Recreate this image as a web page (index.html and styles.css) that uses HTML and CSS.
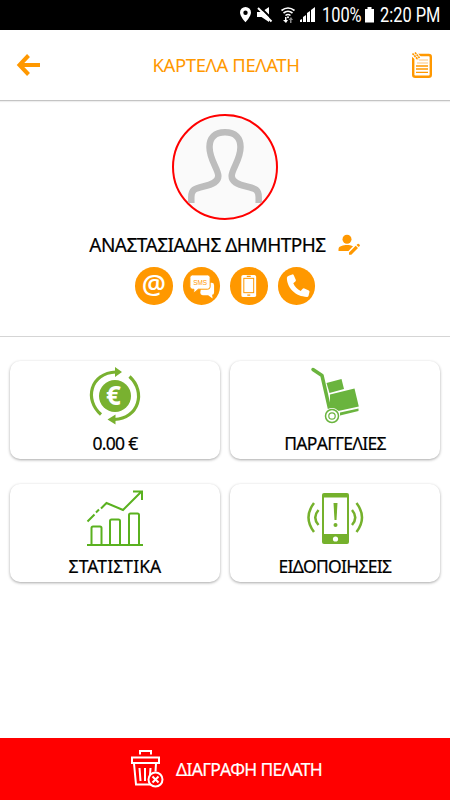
FILE: index.html
```html
<!DOCTYPE html>
<html lang="el">
<head>
    <meta charset="UTF-8">
    <meta name="viewport" content="width=device-width, initial-scale=1.0">
    <title>Καρτέλα Πελάτη</title>
    <link rel="stylesheet" href="styles.css">
</head>
<body>

    <div class="status-bar">
        <svg width="80" height="30" viewBox="238 0 80 30" fill="#fff">
            <path fill-rule="evenodd" d="M245.500 7a5.500 5.500 0 0 0-5.500 5.500c0 4 5.500 9.800 5.500 9.800s5.500-5.800 5.500-9.800a5.500 5.500 0 0 0-5.500-5.500zm0 3.500a2.200 2.200 0 1 1 0 4.400 2.200 2.200 0 0 1 0-4.400z"/>
            <path d="M257 12h4.500l7.500-5v15l-7.500-5H257z"/>
            <path d="M259.500 6.500l14 14" stroke="#000" stroke-width="2"/>
            <path d="M258 8l13.500 13.500" stroke="#fff" stroke-width="2"/>
            <g fill="none" stroke="#fff" stroke-width="1.600">
                <path d="M281.500 10.500q6.500-5 13 0M283.500 13q4.500-3.500 9 0M285.500 15.500q2.500-2 5 0"/>
            </g>
            <circle cx="288" cy="17.300" r="1"/>
            <path d="M285 17v3h-2l3 3 2-3h-1.500v-3z"/>
            <path d="M290 23v-3h-1.500l2.500-3 2 3h-1.500v3z" fill="#888"/>
            <path d="M300 22v-2l2-1v3zM303 22v-5l3-2v7zM307 22v-9l3-2v11zM311 22V10l4-3v15z"/>
        </svg>
        <span class="battery-text"><span>100%</span></span>
        <svg width="12" height="30" viewBox="0 0 12 30" fill="#fff">
            <path d="M1 9h2.500V7h4v2H10v13.500H1z"/>
        </svg>
        <span class="clock"><span>2:20 PM</span></span>
    </div>

    <div class="header">
        <svg width="26" height="24" viewBox="16 53 26 24" fill="none" stroke="#ff9800" stroke-width="4">
            <path d="M40 65H20M28.500 55.500L19.500 65l9 9.500"/>
        </svg>
        <h1>ΚΑΡΤΕΛΑ ΠΕΛΑΤΗ</h1>
        <svg width="24" height="28" viewBox="410 51 24 28" fill="none" stroke="#ff9800">
            <rect x="413.200" y="55" width="17.600" height="21.800" rx="2" stroke-width="2.400"/>
            <path d="M419 60h9M417 63h11" stroke="#ffc477"/>
            <path d="M416 66h12M416 69h12M416 72.300h12" stroke-width="1.300"/>
            <path d="M411 51h5l5 6-4 4-6-5z" fill="#fff" stroke="none"/>
            <path d="M412.500 53.500l5.500 6M415 52.500l4.500 5.500" stroke-width="1.700" stroke-dasharray="2 .6"/>
        </svg>
    </div>

    <div class="profile">
        <div class="avatar">
            <svg width="102" height="102" viewBox="174 116 102 102" fill="none" stroke="#bdbdbd" stroke-width="6.500">
                <path d="M191.300 203v-6c0-7 3-8.500 12-10.500 10-2.200 15-5 15-10.500 0-7-8.800-16-8.800-29 0-9 5-14.800 15.500-14.800s15.500 5.800 15.500 14.800c0 13-8.800 22-8.800 29 0 5.500 5 8.300 15 10.500 9 2 12 3.500 12 10.500v6"/>
            </svg>
        </div>

        <div class="customer">
            <h2>ΑΝΑΣΤΑΣΙΑΔΗΣ ΔΗΜΗΤΡΗΣ</h2>
            <svg width="24" height="24" viewBox="336 233 24 24" fill="#ff9800">
                <circle cx="346" cy="239.300" r="4.500"/>
                <path d="M337.500 251v-2c0-3 5-4 8.500-4 2 0 4.500.4 6 1.200L347.500 251z"/>
                <path d="M348 252.500l6.700-6.700 2.300 2.300-6.700 6.700H348zM355.500 245l1.100-1.100q.7-.5 1.200 0l.9.900q.6.600 0 1.200l-1 1z"/>
            </svg>
        </div>

        <div class="contacts">
            <div class="contact at">@</div>
            <div class="contact">
                <svg width="37.500" height="37.500" viewBox="0 0 38 38" fill="#fff">
                    <path d="M19 16h10q2.500 0 2.500 2.500v7q0 2.500-2 2.700l.5 3.800-4.500-3.500H20q-2.500 0-2.500-2.500z"/>
                    <path d="M9.500 8h15.500q2.500 0 2.500 2.500v9.500q0 2.500-2.500 2.500H15.500l-4.500 4v-4H9.500Q7 22.500 7 20v-9.500Q7 8 9.500 8z" stroke="#ff9800"/>
                    <text class="sms" x="17.300" y="18" text-anchor="middle">SMS</text>
                </svg>
            </div>
            <div class="contact">
                <svg width="37.500" height="37.500" viewBox="0 0 38 38">
                    <rect x="11.500" y="8" width="15" height="22.500" rx="2" fill="#fff"/>
                    <rect x="13.500" y="11" width="11" height="15.500" fill="#ff9800"/>
                    <rect x="14.500" y="12" width="9" height="13.500" fill="#fff"/>
                    <path d="M17 9.500h4M17.500 28.500h3" stroke="#ff9800" stroke-width="1.500"/>
                </svg>
            </div>
            <div class="contact">
                <svg width="37.500" height="37.500" viewBox="0 0 38 38" fill="#fff">
                    <path d="M11.500 8.500l3-1q1-.2 1.500.9l2 4.500q.4 1-.4 1.700l-2.100 1.900c1.500 3.500 4 6.200 7.500 7.700l2-2.200q.8-.8 1.800-.3l4.400 2q1 .5.700 1.600l-1 4q-.4 1-1.500 1C18 30.200 9 21.500 9 11q0-1.800 2.500-2.500z"/>
                </svg>
            </div>
        </div>
    </div>

    <div class="cards">
        <div class="card">
            <svg width="60" height="60" viewBox="85 365 60 60">
                <circle cx="115" cy="396" r="16" fill="#79b130"/>
                <g fill="none" stroke="#79b130" stroke-width="3.200">
                    <path d="M101 414.500C84 400 90 373 116 372"/>
                    <path d="M129.500 376.500c17 15.500 9 42-15 43"/>
                </g>
                <path d="M115 367l7 5-7 5zM115.500 414.500l-8 5 8 5z" fill="#79b130"/>
                <text class="coin" x="113.500" y="405" text-anchor="middle">€</text>
            </svg>
            <p class="amount">0.00 €</p>
        </div>

        <div class="card">
            <svg width="60" height="60" viewBox="305 365 60 60" fill="#6ab43e">
                <path d="M313 369.500l9 6 7.500 33" fill="none" stroke="#6ab43e" stroke-width="3.500" stroke-linecap="round" stroke-linejoin="round"/>
                <path d="M326.500 383l15-4 2.500 10-14.500 4z"/>
                <path d="M330 394.500l24.500-6 4.300 18-25 5.500q-2.500-2-3.800-2zM340 412.500l18.500-4v2.600l-18.500 4.500z"/>
                <circle cx="332" cy="416" r="8" fill="#fff"/>
                <circle cx="332" cy="416" r="6.500" fill="#fff" stroke="#6ab43e" stroke-width="1.500"/>
                <circle cx="332" cy="416" r="3.200" fill="#fff" stroke="#6ab43e" stroke-width="1.200"/>
            </svg>
            <p>ΠΑΡΑΓΓΕΛΙΕΣ</p>
        </div>

        <div class="card">
            <svg width="60" height="60" viewBox="85 488 60 60" fill="none" stroke="#5ab11f" stroke-width="2">
                <path d="M87 545h56M91.500 545v-17q0-1.500 1.500-1.500h7q1.500 0 1.500 1.500v17M110 545v-24q0-1.500 1.500-1.500h7q1.500 0 1.500 1.500v24M129 545v-30q0-1.500 1.500-1.500h7q1.500 0 1.500 1.500v30"/>
                <path d="M87.500 521.500l7-7M96 512.500l3-3M101 508.500l5.500-5.500 16.500 7 18.500-18.500M133 491.500h9v8.500"/>
            </svg>
            <p class="stats">ΣΤΑΤΙΣΤΙΚΑ</p>
        </div>

        <div class="card">
            <svg width="60" height="60" viewBox="305 488 60 60" fill="none" stroke="#75b12c">
                <rect x="322" y="493" width="27" height="51" rx="2" fill="#75b12c" stroke="none"/>
                <path d="M324 497.500h23V534h-23z" fill="#fff" stroke="none"/>
                <circle cx="335.500" cy="539" r="2.600" fill="#fff" stroke="none"/>
                <path d="M333.500 503h4l-1 17h-2z" fill="#75b12c" stroke="none"/>
                <circle cx="335.500" cy="525" r="2" fill="#75b12c" stroke="none"/>
                <path d="M314 503q-11 14.500 0 29M318.500 510q-6.500 7.500 0 15M356.500 503q11 14.500 0 29M352 510q6.500 7.500 0 15" stroke-width="2.500"/>
            </svg>
            <p>ΕΙΔΟΠΟΙΗΣΕΙΣ</p>
        </div>
    </div>

    <div class="footer">
        <svg width="36" height="40" viewBox="130 749 36 40" fill="none" stroke="#fff" stroke-width="2">
            <path d="M140 754.500v-3.500h11v3.500M132 757.500h27v5.500h-27zM134 763.500l2 21h15M156 763.500l-.5 8M139.500 768l1 13M145 768v13M150.500 768l-.5 7"/>
            <circle cx="155.500" cy="779.500" r="7" fill="#f00"/>
            <path d="M152.500 776.500l6 6M158.500 776.500l-6 6"/>
        </svg>
        <p>ΔΙΑΓΡΑΦΗ ΠΕΛΑΤΗ</p>
    </div>

</body>
</html>
```
FILE: styles.css
```css
* {
    box-sizing: border-box;
}

body {
    font-family: 'Noto Sans', sans-serif;
    margin: 0;
    padding: 0;
    height: 800px;
    display: flex;
    flex-direction: column;
    background-color: #fff;
    color: #000;
    overflow: hidden;
}

h1, h2, p {
    margin: 0;
    font-weight: 400;
    white-space: nowrap;
    -webkit-text-stroke: 0.2px;
}

svg {
    display: block;
    flex: none;
}

.status-bar {
    height: 30px;
    flex: none;
    background: #000;
    color: #fff;
    display: flex;
    padding-left: 238px;
    font-family: Roboto, sans-serif;
    font-size: 19.5px;
    line-height: 31px;
}

.status-bar span span {
    display: block;
    white-space: nowrap;
    transform: scaleX(0.84);
    transform-origin: left;
}

.battery-text {
    width: 42px;
    margin-left: 4px;
}

.clock {
    width: 62px;
    margin-left: 4px;
}

.header {
    height: 71px;
    flex: none;
    display: flex;
    align-items: center;
    justify-content: space-between;
    padding: 0 16px;
    border-bottom: 1px solid #c4c4c4;
    box-shadow: 0 1px 1px #eee;
    color: #ff9800;
}

.header h1 {
    font-size: 18.5px;
    line-height: 24px;
    letter-spacing: -0.4px;
    -webkit-text-stroke: 0;
}

.profile {
    height: 236px;
    flex: none;
    display: flex;
    flex-direction: column;
    align-items: center;
    padding-top: 13px;
    border-bottom: 1px solid #d5d5d5;
}

.avatar {
    width: 106px;
    height: 106px;
    border: 2px solid #f00;
    border-radius: 50%;
    background: #fafafa;
    overflow: hidden;
}

.customer {
    display: flex;
    align-items: center;
    gap: 11px;
    height: 26px;
    margin-top: 12px;
}

.customer h2 {
    font-size: 19px;
    letter-spacing: -0.5px;
}

.contacts {
    display: flex;
    gap: 10px;
    margin-top: 9px;
}

.contact {
    width: 37.5px;
    height: 37.5px;
    border-radius: 50%;
    background: #ff9800;
    color: #fff;
}

.at {
    font-family: 'Open Sans', sans-serif;
    font-size: 27px;
    font-weight: 600;
    line-height: 34px;
    text-align: center;
}

.sms {
    font-family: 'Liberation Sans', sans-serif;
    font-size: 6.5px;
    fill: #ff9800;
}

.cards {
    display: grid;
    grid-template-columns: 210px 210px;
    gap: 25px 10px;
    padding: 24px 10px;
}

.card {
    height: 98px;
    display: flex;
    flex-direction: column;
    align-items: center;
    padding-top: 4px;
    border-radius: 10px;
    background: #fff;
    box-shadow: 0 1px 3px rgba(0, 0, 0, 0.35);
}

.card p {
    font-size: 17.5px;
    line-height: 24px;
    margin-top: 6px;
    letter-spacing: -0.7px;
}

.card .stats {
    letter-spacing: 0.1px;
}

.coin {
    font-family: 'Open Sans', sans-serif;
    font-size: 26px;
    font-weight: 700;
    fill: #fff;
}

.footer {
    height: 62px;
    margin-top: auto;
    display: flex;
    align-items: center;
    gap: 10px;
    padding-left: 130px;
    background: #f00;
    color: #fff;
}

.footer p {
    font-size: 17.5px;
    letter-spacing: -0.7px;
}
```
